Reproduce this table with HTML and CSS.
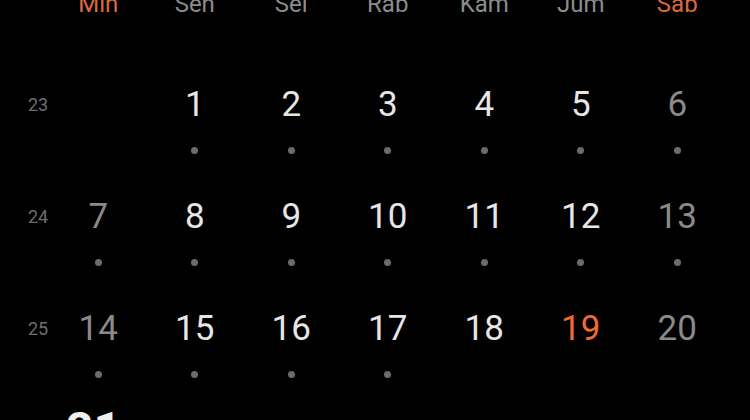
FILE: index.html
```html
<!DOCTYPE html>
<html lang="id">
<head>
<meta charset="utf-8">
<title>Kalender</title>
<link rel="stylesheet" href="styles.css">
</head>
<body>
<div class="cal">
  <div class="head">
    <span></span>
    <span class="wkend">Min</span>
    <span>Sen</span>
    <span>Sel</span>
    <span>Rab</span>
    <span>Kam</span>
    <span>Jum</span>
    <span class="wkend">Sab</span>
  </div>
  <div class="weeks">
    <div class="week">
      <div class="wn">23</div>
      <div class="day"></div>
      <div class="day"><span class="num">1</span><i class="dot"></i></div>
      <div class="day"><span class="num">2</span><i class="dot"></i></div>
      <div class="day"><span class="num">3</span><i class="dot"></i></div>
      <div class="day"><span class="num">4</span><i class="dot"></i></div>
      <div class="day"><span class="num">5</span><i class="dot"></i></div>
      <div class="day"><span class="num dim">6</span><i class="dot"></i></div>
    </div>
    <div class="week">
      <div class="wn">24</div>
      <div class="day"><span class="num dim">7</span><i class="dot"></i></div>
      <div class="day"><span class="num">8</span><i class="dot"></i></div>
      <div class="day"><span class="num">9</span><i class="dot"></i></div>
      <div class="day"><span class="num">10</span><i class="dot"></i></div>
      <div class="day"><span class="num">11</span><i class="dot"></i></div>
      <div class="day"><span class="num">12</span><i class="dot"></i></div>
      <div class="day"><span class="num dim">13</span><i class="dot"></i></div>
    </div>
    <div class="week">
      <div class="wn">25</div>
      <div class="day"><span class="num dim">14</span><i class="dot"></i></div>
      <div class="day"><span class="num">15</span><i class="dot"></i></div>
      <div class="day"><span class="num">16</span><i class="dot"></i></div>
      <div class="day"><span class="num">17</span><i class="dot"></i></div>
      <div class="day"><span class="num">18</span></div>
      <div class="day"><span class="num today">19</span></div>
      <div class="day"><span class="num dim">20</span></div>
    </div>
  </div>
  <div class="big">21</div>
</div>
</body>
</html>
```
FILE: styles.css
```css
html, body {
  margin: 0;
  padding: 0;
  background: #000;
  overflow: hidden;
}
body {
  width: 750px;
  height: 420px;
  font-family: Roboto, "Noto Sans", sans-serif;
  color: #e6e6e6;
}
.head {
  display: grid;
  grid-template-columns: 50px repeat(7, 96.5px);
  margin-top: -8px;
  font-size: 24px;
  line-height: 24px;
  color: #8c8c8c;
  text-align: center;
}
.head .wkend {
  color: #dd6a3a;
}
.weeks {
  margin-top: 69px;
  display: flex;
  flex-direction: column;
  gap: 43px;
}
.week {
  display: grid;
  grid-template-columns: 50px repeat(7, 96.5px);
  height: 69px;
}
.wn {
  font-size: 18px;
  line-height: 40px;
  color: #6e6e6e;
  padding-left: 28px;
}
.day {
  display: flex;
  flex-direction: column;
  align-items: center;
}
.num {
  font-size: 35px;
  line-height: 40px;
  color: #e6e6e6;
}
.num.dim {
  color: #8a8a8a;
}
.num.today {
  color: #f06a33;
}
.dot {
  display: block;
  width: 7px;
  height: 7px;
  border-radius: 50%;
  background: #6c6c6c;
  margin-top: 22px;
}
.big {
  margin-top: 24px;
  padding-left: 66px;
  font-size: 48px;
  line-height: 56px;
  font-weight: 700;
  color: #f0f0f0;
}
```
